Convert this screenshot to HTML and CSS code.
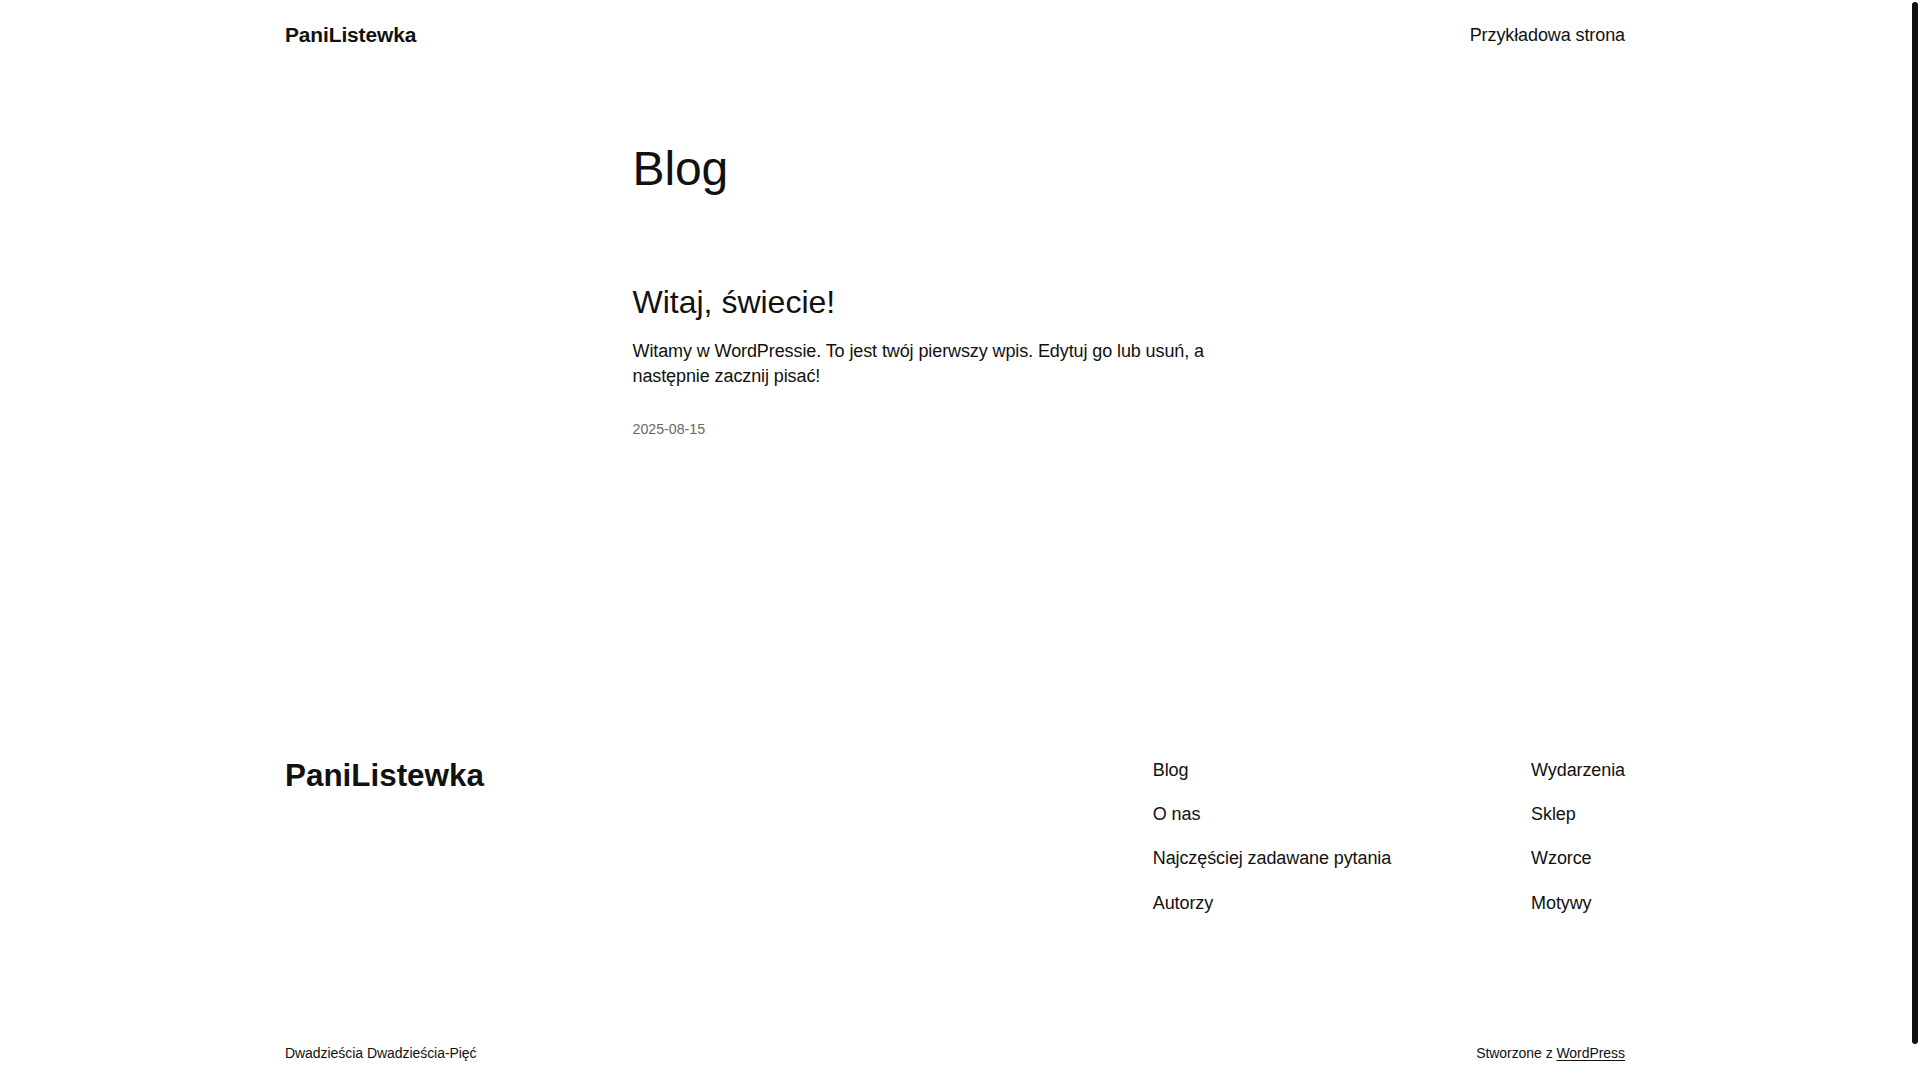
FILE: index.html
```html
<!DOCTYPE html>
<html lang="pl">
<head>
<meta charset="utf-8">
<title>Blog – PaniListewka</title>
<link rel="stylesheet" href="styles.css">
</head>
<body>
<div class="site">
  <header class="site-header wide">
    <a class="site-title" href="#">PaniListewka</a>
    <nav class="header-nav"><a href="#">Przykładowa strona</a></nav>
  </header>

  <main class="main">
    <h1 class="page-title">Blog</h1>
    <article class="post">
      <h2 class="post-title"><a href="#">Witaj, świecie!</a></h2>
      <p class="excerpt">Witamy w WordPressie. To jest twój pierwszy wpis. Edytuj go lub usuń, a następnie zacznij pisać!</p>
      <div class="post-date">2025-08-15</div>
    </article>
  </main>

  <footer class="site-footer wide">
    <div class="footer-top">
      <a class="footer-title" href="#">PaniListewka</a>
      <div class="footer-navs">
        <nav class="footer-nav">
          <a href="#">Blog</a>
          <a href="#">O nas</a>
          <a href="#">Najczęściej zadawane pytania</a>
          <a href="#">Autorzy</a>
        </nav>
        <nav class="footer-nav">
          <a href="#">Wydarzenia</a>
          <a href="#">Sklep</a>
          <a href="#">Wzorce</a>
          <a href="#">Motywy</a>
        </nav>
      </div>
    </div>
    <div class="footer-bottom">
      <p>Dwadzieścia Dwadzieścia-Pięć</p>
      <p>Stworzone z <a class="wp-link" href="#">WordPress</a></p>
    </div>
  </footer>
</div>
<div class="scroll-thumb"></div>
</body>
</html>
```

FILE: styles.css
```css
html, body {
  margin: 0;
  padding: 0;
  background: #ffffff;
  overflow: hidden;
}

body {
  font-family: "Liberation Sans", Arial, sans-serif;
  color: #111111;
  font-size: 18px;
  letter-spacing: -0.1px;
}

a {
  color: inherit;
  text-decoration: none;
}

p, h1, h2 {
  margin: 0;
}

.site {
  margin-right: 10px;
}

.wide {
  max-width: 1340px;
  margin-left: auto;
  margin-right: auto;
}

/* Header */
.site-header {
  display: flex;
  justify-content: space-between;
  align-items: flex-start;
  padding: 22px 0 23px;
}

.site-title {
  font-weight: 700;
  font-size: 20.9px;
  line-height: 25px;
}

.header-nav {
  margin-top: 2.5px;
}

.header-nav a {
  font-size: 18px;
  line-height: 1.2;
  display: block;
}

/* Main */
.main {
  width: 645px;
  margin: 0 auto;
  padding-top: 71.5px;
}

.page-title {
  font-size: 48px;
  font-weight: 400;
  line-height: 1.125;
}

.post {
  margin-top: 87.1px;
}

.post-title {
  font-size: 32px;
  font-weight: 400;
  line-height: 1.2;
  letter-spacing: 0;
}

.excerpt {
  margin-top: 18.4px;
  font-size: 18px;
  line-height: 24.5px;
}

.post-date {
  margin-top: 31.5px;
  font-size: 14.2px;
  line-height: 1.4;
  letter-spacing: 0;
  color: #686868;
}

/* Footer */
.site-footer {
  margin-top: 316.7px;
}

.footer-top {
  display: flex;
  justify-content: space-between;
  align-items: flex-start;
}

.footer-title {
  margin-top: 0.8px;
  font-weight: 700;
  font-size: 31.4px;
  line-height: 1.2;
  letter-spacing: 0;
}

.footer-navs {
  display: flex;
  gap: 140px;
  padding-top: 3.6px;
}

.footer-nav {
  display: flex;
  flex-direction: column;
  gap: 22.6px;
}

.footer-nav a {
  display: block;
  font-size: 18px;
  line-height: 1.2;
}

.footer-bottom {
  display: flex;
  justify-content: space-between;
  margin-top: 130px;
  font-size: 14px;
  line-height: 1.4;
  letter-spacing: -0.05px;
}

.wp-link {
  text-decoration: underline;
  text-underline-offset: 2px;
}

/* overlay scrollbar thumb */
.scroll-thumb {
  position: fixed;
  top: 2px;
  right: 2px;
  width: 6px;
  height: 1042px;
  border-radius: 3px;
  background: #111111;
}
```
